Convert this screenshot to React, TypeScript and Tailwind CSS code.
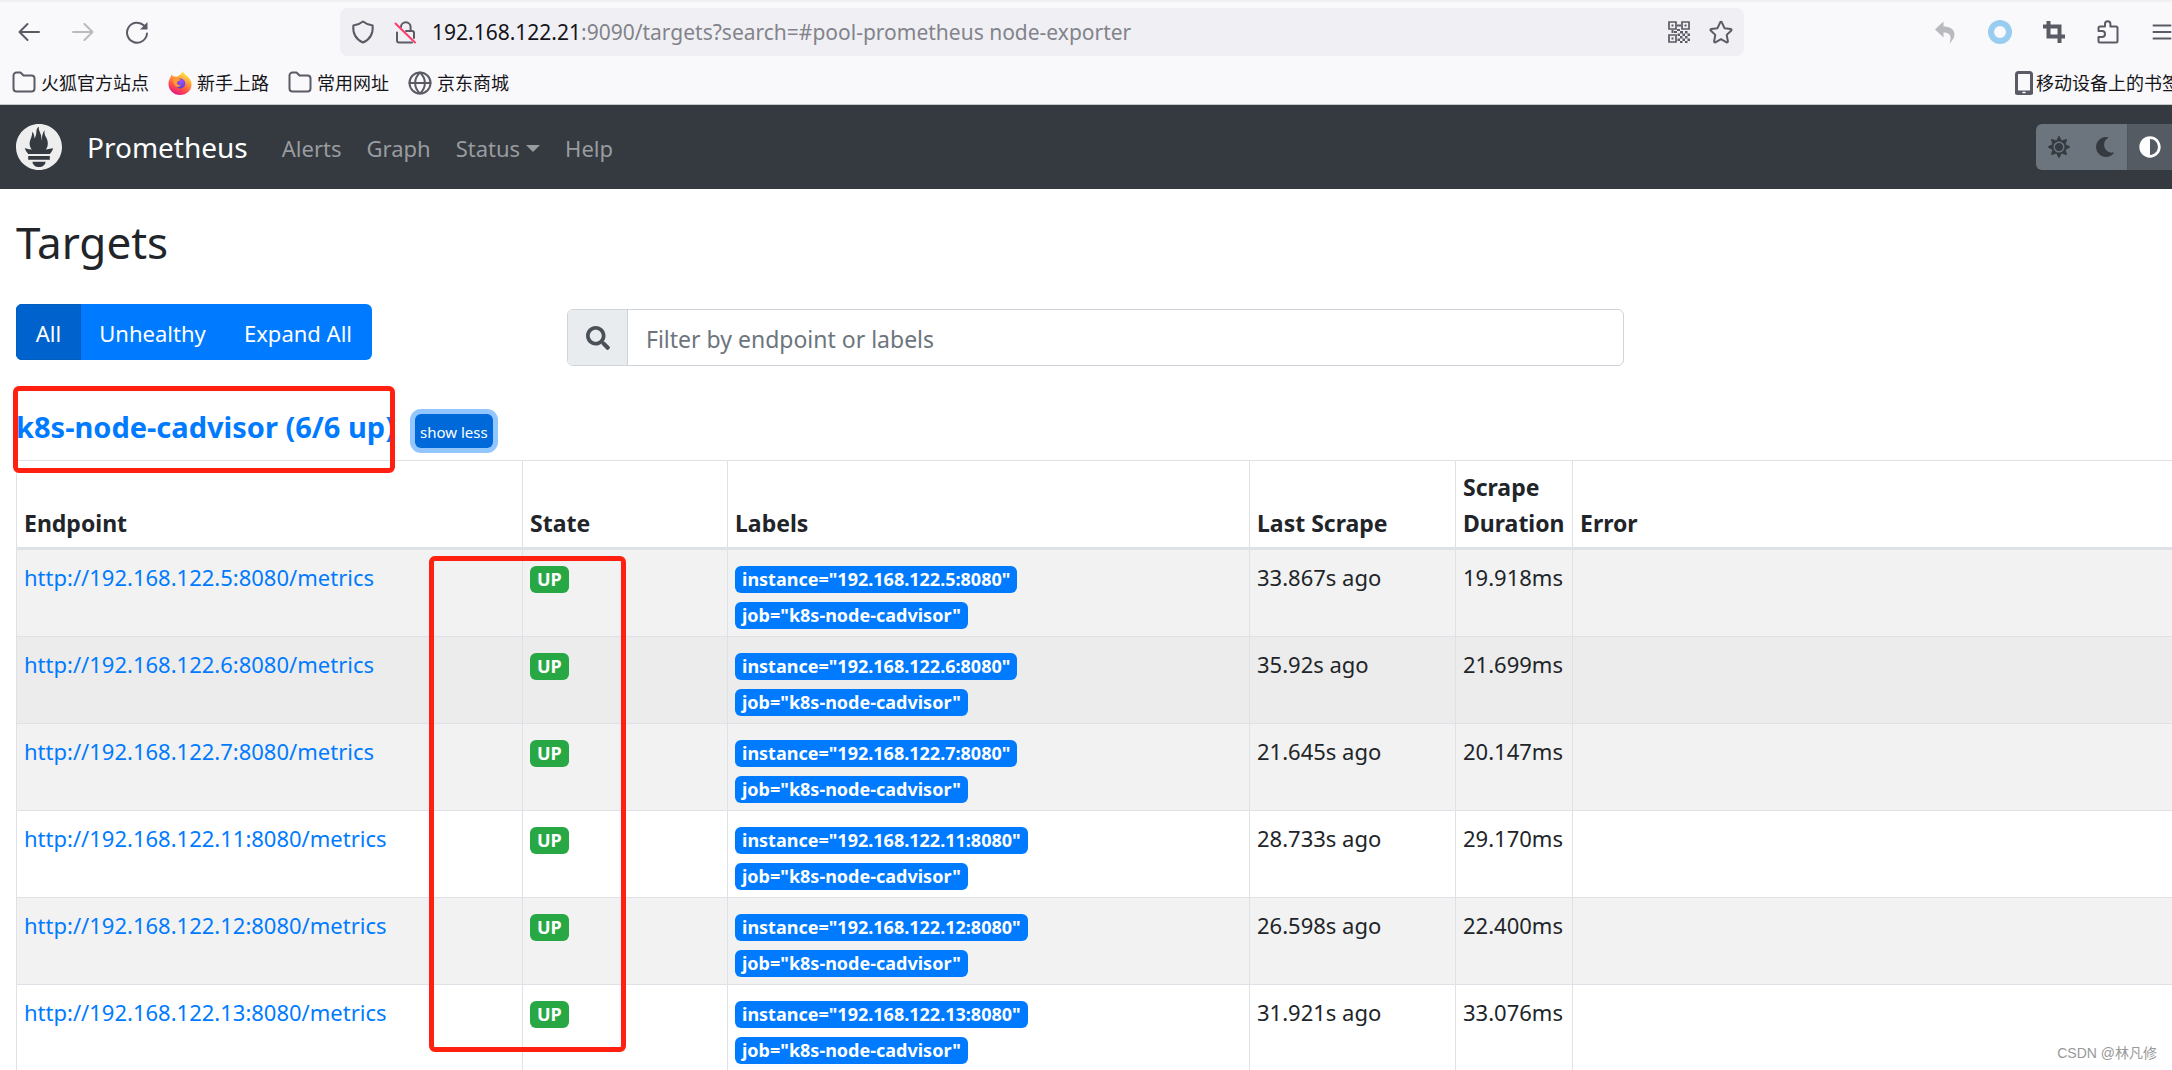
import React, { useState } from "react";
import { FaSearch, FaSun, FaMoon, FaAdjust } from "react-icons/fa";
import { SiPrometheus } from "react-icons/si";

const targets = [
  { host: "192.168.122.5:8080", scrape: "33.867s", duration: "19.918ms", row: "bg-[#f2f2f2]" },
  { host: "192.168.122.6:8080", scrape: "35.92s", duration: "21.699ms", row: "bg-[#ececec]" },
  { host: "192.168.122.7:8080", scrape: "21.645s", duration: "20.147ms", row: "bg-[#f2f2f2]" },
  { host: "192.168.122.11:8080", scrape: "28.733s", duration: "29.170ms", row: "bg-white" },
  { host: "192.168.122.12:8080", scrape: "26.598s", duration: "22.400ms", row: "bg-[#f2f2f2]" },
  { host: "192.168.122.13:8080", scrape: "31.921s", duration: "33.076ms", row: "bg-white" },
];

function Svg({ children, className = "size-6" }: { children: React.ReactNode; className?: string }) {
  return (
    <svg
      viewBox="0 0 24 24"
      className={`shrink-0 ${className}`}
      fill="none"
      stroke="currentColor"
      strokeWidth="2"
      strokeLinecap="round"
      strokeLinejoin="round"
      aria-hidden="true"
    >
      {children}
    </svg>
  );
}

const Back = () => (
  <Svg>
    <path d="M22 12H2.5M10.5 4L2.5 12l8 8" />
  </Svg>
);
const Forward = () => (
  <Svg>
    <path d="M2 12h19.5M13.5 4l8 8-8 8" />
  </Svg>
);
const Reload = () => (
  <Svg>
    <path d="M22 13.5A10 10 0 1 1 19 5.5" />
    <path d="M22.5 2v7.500H15z" fill="currentColor" stroke="none" />
  </Svg>
);
const Shield = () => (
  <Svg>
    <path d="M12 1.500c3 2.500 6 3.500 9.700 4 .5 7-1.500 13.500-9.700 17-8.200-3.500-10.200-10-9.700-17 3.700-.5 6.700-1.500 9.700-4z" />
  </Svg>
);
const LockOff = () => (
  <Svg>
    <path d="M8 7a4.800 4.800 0 0 1 9.600 0v4h1.400a2 2 0 0 1 2 2v5M4 12.500V20.500a2 2 0 0 0 2 2h13M13 11h4" />
    <path d="M2.500 3.500L22 22.500" stroke="#ff3b6b" />
  </Svg>
);
const Qr = () => (
  <Svg>
    <path
      d="M2 2h7v7H2zM15 2h7v7h-7zM2 15h7v7H2z"
      strokeWidth="1.700"
      strokeLinejoin="miter"
    />
    <path
      d="M4.500 4.500h2v2h-2zM17.500 4.500h2v2h-2zM4.500 17.500h2v2h-2zM10 4.500h4v2h-4zM4.500 10h2v3h-2zM7 11h3v2H7zM10 9h3v2h-3zM13 11h3v2.500h-3zM18 11h2.500v2.500H18zM10.500 13.500H13V16h-2.500zM15.500 13.500H18V16h-2.500zM20.500 13.500H23V16h-2.500zM13 16h2.500v2.500H13zM18 16h2.500v2.500H18zM10.500 18.500H13V21h-2.500zM15.500 18.500H18V21h-2.500zM20.500 18.500H23V21h-2.500zM13 21h2.500v2H13zM18 21h2.500v2H18z"
      fill="currentColor"
      stroke="none"
    />
  </Svg>
);
const StarIcon = () => (
  <Svg>
    <path d="M11.200 2.300a.9.900 0 0 1 1.600 0l2.700 5.900 6.300.8a.9.900 0 0 1 .5 1.500l-4.600 4.400 1.200 6.500a.9.900 0 0 1-1.300.9L12 19.200l-5.600 3.100a.9.900 0 0 1-1.300-.9l1.200-6.500-4.600-4.400a.9.900 0 0 1 .5-1.500l6.300-.8z" />
  </Svg>
);
const Undo = () => (
  <Svg>
    <path
      d="M9.500 1.500L1 9.500l8.500 8v-5c5.500 0 9 2.500 6 11 8-7 6.500-17-6-17z"
      fill="currentColor"
      stroke="none"
    />
  </Svg>
);
const CropIcon = () => (
  <Svg>
    <path d="M6.500 1v15.500H23M1 6.500h16.500V23" strokeWidth="4" strokeLinecap="butt" strokeLinejoin="miter" />
  </Svg>
);
const Puzzle = () => (
  <Svg>
    <path d="M2.500 10V8A1.500 1.500 0 0 1 4 6.500h5V4a2.700 2.700 0 0 1 5.400 0v2.500H20A1.500 1.500 0 0 1 21.500 8v13a1.500 1.500 0 0 1-1.500 1.500H4A1.500 1.500 0 0 1 2.500 21v-4H6a2.800 2.800 0 0 0 0-6H2.500" />
  </Svg>
);
const Menu = () => (
  <Svg>
    <path d="M3.500 5.500h17M3.500 12h17M3.500 18.500h17" />
  </Svg>
);
const FolderIcon = () => (
  <Svg>
    <path d="M1.500 4.500a3 3 0 0 1 3-3h4l3 3h8a3 3 0 0 1 3 3v10a3 3 0 0 1-3 3h-15a3 3 0 0 1-3-3z" />
  </Svg>
);
const GlobeIcon = () => (
  <Svg>
    <circle cx="12" cy="12" r="10.500" />
    <path d="M1.500 12h21M12 1.500c-6.500 6-6.500 15 0 21M12 1.500c6.500 6 6.500 15 0 21" />
  </Svg>
);
const Phone = () => (
  <Svg>
    <rect x="4.500" y="1.500" width="15" height="21" rx="2" strokeWidth="3" />
    <path d="M4 20.500h16v2H4z" fill="currentColor" />
    <path d="M11 21.500h2" stroke="#f9f9fb" strokeWidth="1.500" />
  </Svg>
);
const Firefox = () => (
  <svg viewBox="0 0 24 24" className="size-6 shrink-0" aria-hidden="true">
    <defs>
      <linearGradient id="ffBody" x1="0.8" y1="0.05" x2="0.35" y2="1">
        <stop offset="0" stopColor="#fff44f" />
        <stop offset="0.35" stopColor="#ffa436" />
        <stop offset="0.7" stopColor="#ff4f4b" />
        <stop offset="1" stopColor="#e31587" />
      </linearGradient>
      <radialGradient id="ffCore" cx="0.6" cy="0.3" r="0.8">
        <stop offset="0" stopColor="#a34fff" />
        <stop offset="1" stopColor="#4b3bd0" />
      </radialGradient>
    </defs>
    <path
      d="M14.500 0c1 2.500 4 4 6 6.500 2 2 3 4.500 3 7C23.500 19.500 18.500 24 12 24S.5 19 .5 13c0-3 1-5.500 2.500-7.500l.5-2 2 2c1 0 2-.2 3 .3l2.500-1.300c1-.5 2-1 3.500-4.500z"
      fill="url(#ffBody)"
    />
    <circle cx="12.300" cy="12.500" r="5" fill="url(#ffCore)" />
    <path d="M5 8c3-1.500 5 0 7.500.5-.5 1.500-3 1.500-3.500 3-.3 2 2 3 4 2.500-2 3.500-8 2.500-8-6z" fill="#ff9a2e" />
  </svg>
);

function ToolButton({ label, children, className = "" }: { label: string; children: React.ReactNode; className?: string }) {
  return (
    <button type="button" aria-label={label} className={`flex shrink-0 items-center justify-center ${className}`}>
      {children}
    </button>
  );
}

function Bookmark({ icon, children }: { icon: React.ReactNode; children: React.ReactNode }) {
  return (
    <a href="#" className="flex shrink-0 items-center gap-[5px] whitespace-nowrap text-[#15141a]">
      <span className="text-[#5b5b66]">{icon}</span>
      {children}
    </a>
  );
}

function BrowserChrome() {
  return (
    <div className="border-t-2 border-b border-t-[#f0f0f2] border-b-[#c4c8c6] bg-[#f9f9fb]">
      <div className="flex h-[60px] items-center pl-[17px] text-[#5b5b66]">
        <div className="flex w-[323px] shrink-0 gap-[30px]">
          <ToolButton label="Back"><Back /></ToolButton>
          <ToolButton label="Forward" className="opacity-40"><Forward /></ToolButton>
          <ToolButton label="Reload"><Reload /></ToolButton>
        </div>
        <div className="flex h-12 min-w-0 flex-1 items-center rounded-lg bg-[#f0f0f4] px-[11px]">
          <span className="flex gap-[18px]">
            <Shield />
            <LockOff />
          </span>
          <span className="ml-[15px] flex-1 truncate pt-[2px] text-[21px] text-[#83838b]">
            <span className="text-[#15141a]">192.168.122.21</span>:9090/targets?search=#pool-prometheus node-exporter
          </span>
          <span className="flex gap-[18px]">
            <ToolButton label="QR code"><Qr /></ToolButton>
            <ToolButton label="Bookmark this page"><StarIcon /></ToolButton>
          </span>
        </div>
        <div className="-mr-[2px] ml-[190px] flex shrink-0 gap-[30px]">
          <ToolButton label="Undo" className="text-[#b9b9c0]"><Undo /></ToolButton>
          <ToolButton label="Assistant">
            <span className="size-6 rounded-full border-[6px] border-[#99cdf0]" />
          </ToolButton>
          <ToolButton label="Screenshot"><CropIcon /></ToolButton>
          <ToolButton label="Extensions"><Puzzle /></ToolButton>
          <ToolButton label="Menu"><Menu /></ToolButton>
        </div>
      </div>
      <div className="flex h-[42px] items-center pl-3 text-[18px]">
        <div className="flex flex-1 gap-[19px]">
          <Bookmark icon={<FolderIcon />}>火狐官方站点</Bookmark>
          <Bookmark icon={<Firefox />}>新手上路</Bookmark>
          <Bookmark icon={<FolderIcon />}>常用网址</Bookmark>
          <Bookmark icon={<GlobeIcon />}>京东商城</Bookmark>
        </div>
        <a href="#" className="-mr-2 flex shrink-0 items-center whitespace-nowrap text-[#15141a]">
          <span className="text-[#5b5b66]"><Phone /></span>
          移动设备上的书签
        </a>
      </div>
    </div>
  );
}

function Navbar() {
  return (
    <nav className="flex h-[84px] items-center bg-[#343a40] pl-4 text-[#999c9f]">
      <SiPrometheus className="size-[46px] text-[#eeeeee]" aria-hidden="true" />
      <a href="#" className="ml-[25px] text-[28px] text-white">Prometheus</a>
      <div className="ml-[34px] flex flex-1 gap-[25px] pt-[2px]">
        <a href="#">Alerts</a>
        <a href="#">Graph</a>
        <button type="button" className="flex items-center gap-[6px]">
          Status
          <span className="border-x-[7px] border-t-[7px] border-x-transparent border-t-[#999c9f]" />
        </button>
        <a href="#">Help</a>
      </div>
      <div className="flex h-[46px] overflow-hidden rounded-l-md bg-[#6c757d] text-[#343a40]">
        <button type="button" aria-label="Light theme" className="flex w-[46px] items-center justify-center">
          <FaSun className="size-[22px]" />
        </button>
        <button type="button" aria-label="Dark theme" className="flex w-[45px] items-center justify-center">
          <FaMoon className="size-[20px]" />
        </button>
        <button
          type="button"
          aria-label="Browser theme"
          className="flex w-[45px] items-center justify-center border-l border-[#4e555b] bg-[#545b62] text-white"
        >
          <FaAdjust className="size-[22px]" />
        </button>
      </div>
    </nav>
  );
}

function Badge({ color, children }: { color: string; children: React.ReactNode }) {
  return (
    <span className="flex h-9 items-center">
      <span className={`flex h-[27px] items-center rounded-md px-[7px] text-[18px] font-bold whitespace-nowrap text-white ${color}`}>
        {children}
      </span>
    </span>
  );
}

function TargetsTable() {
  const th = "border border-b-[3px] border-[#dee2e6] pt-2 pr-2 pb-[6px] pl-[7px] align-bottom text-[23px] font-bold";
  const td = "border border-[#dee2e6] pr-2 pl-[7px] align-top";
  const textCell = `${td} pt-[9px] pb-[5px]`;
  const badgeCell = `${td} pt-[11px] pb-[3px]`;
  return (
    <div className="-mr-10">
      <table className="w-full table-fixed border-collapse text-left leading-9">
        <colgroup>
          <col className="w-[506px]" />
          <col className="w-[205px]" />
          <col className="w-[522px]" />
          <col className="w-[206px]" />
          <col className="w-[117px]" />
          <col />
        </colgroup>
        <thead>
          <tr>
            <th className={th}>Endpoint</th>
            <th className={th}>State</th>
            <th className={th}>Labels</th>
            <th className={th}>Last Scrape</th>
            <th className={th}>Scrape Duration</th>
            <th className={th}>Error</th>
          </tr>
        </thead>
        <tbody>
          {targets.map((t) => (
            <tr key={t.host} className={t.row}>
              <td className={textCell}>
                <a href="#" className="text-[#007bff]">{`http://${t.host}/metrics`}</a>
              </td>
              <td className={badgeCell}>
                <Badge color="bg-[#28a745]">UP</Badge>
              </td>
              <td className={badgeCell}>
                <Badge color="bg-[#007bff]">{`instance="${t.host}"`}</Badge>
                <Badge color="bg-[#007bff]">{`job="k8s-node-cadvisor"`}</Badge>
              </td>
              <td className={textCell}>{`${t.scrape} ago`}</td>
              <td className={textCell}>{t.duration}</td>
              <td className={textCell}></td>
            </tr>
          ))}
        </tbody>
      </table>
    </div>
  );
}

export default function App() {
  const [filter, setFilter] = useState("");
  return (
    <div className="relative h-screen overflow-hidden bg-white font-['Noto_Sans','Noto_Sans_CJK_SC',sans-serif] text-[22px] text-[#212529]">
      <BrowserChrome />
      <Navbar />
      <main className="pl-4">
        <h2 className="pt-6 text-[44px] leading-[58px]">Targets</h2>
        <div className="mt-[33px] flex items-start">
          <div className="flex h-14 w-[356px] shrink-0 overflow-hidden rounded-md bg-[#007bff] text-white">
            <button type="button" className="w-[65px] border border-[#005cbf] bg-[#0062cc] pt-[3px]">All</button>
            <button type="button" className="flex-1 pt-[3px]">Unhealthy</button>
            <button type="button" className="w-[148px] pt-[3px]">Expand All</button>
          </div>
          <div className="mt-[5px] mr-[548px] ml-[195px] flex h-[57px] min-w-0 flex-1 rounded-md border border-[#ced4da]">
            <label htmlFor="filter" aria-label="Filter" className="flex w-[60px] items-center justify-center rounded-l-md border-r border-[#ced4da] bg-[#e9ecef] text-[#495057]">
              <FaSearch className="size-6" />
            </label>
            <input
              id="filter"
              value={filter}
              onChange={(e) => setFilter(e.target.value)}
              placeholder="Filter by endpoint or labels"
              className="min-w-0 flex-1 rounded-r-md px-[18px] pt-[3px] text-[23px] outline-none placeholder:text-[#6c757d]"
            />
          </div>
        </div>
        <section className="mt-[34px]">
          <div className="flex h-[60px] items-start">
            <h3 className="relative z-10 -ml-[3px] w-[384px] pl-[3px] text-[29px] leading-[54px] font-bold whitespace-nowrap">
              <a href="#" className="text-[#007bff]">k8s-node-cadvisor (6/6 up)</a>
              <span className="pointer-events-none absolute -top-[14px] right-[2px] left-0 h-[87px] rounded-md border-[5px] border-[#ff2010]" />
            </h3>
            <button
              type="button"
              className="mt-[14px] ml-[18px] h-[34px] rounded-md bg-[#0069d9] px-[5px] pt-[2px] text-[15px] text-white ring-[5px] ring-[#93c6ff]"
            >
              show less
            </button>
          </div>
          <div className="relative">
            <TargetsTable />
            <span className="pointer-events-none absolute top-24 left-[413px] h-[496px] w-[197px] rounded-md border-[5px] border-[#ff2010]" />
          </div>
        </section>
      </main>
      <span className="absolute right-[15px] bottom-[6px] font-['Liberation_Sans','Noto_Sans_CJK_SC',sans-serif] text-[14px] text-[#999999]">
        CSDN @林凡修
      </span>
    </div>
  );
}
